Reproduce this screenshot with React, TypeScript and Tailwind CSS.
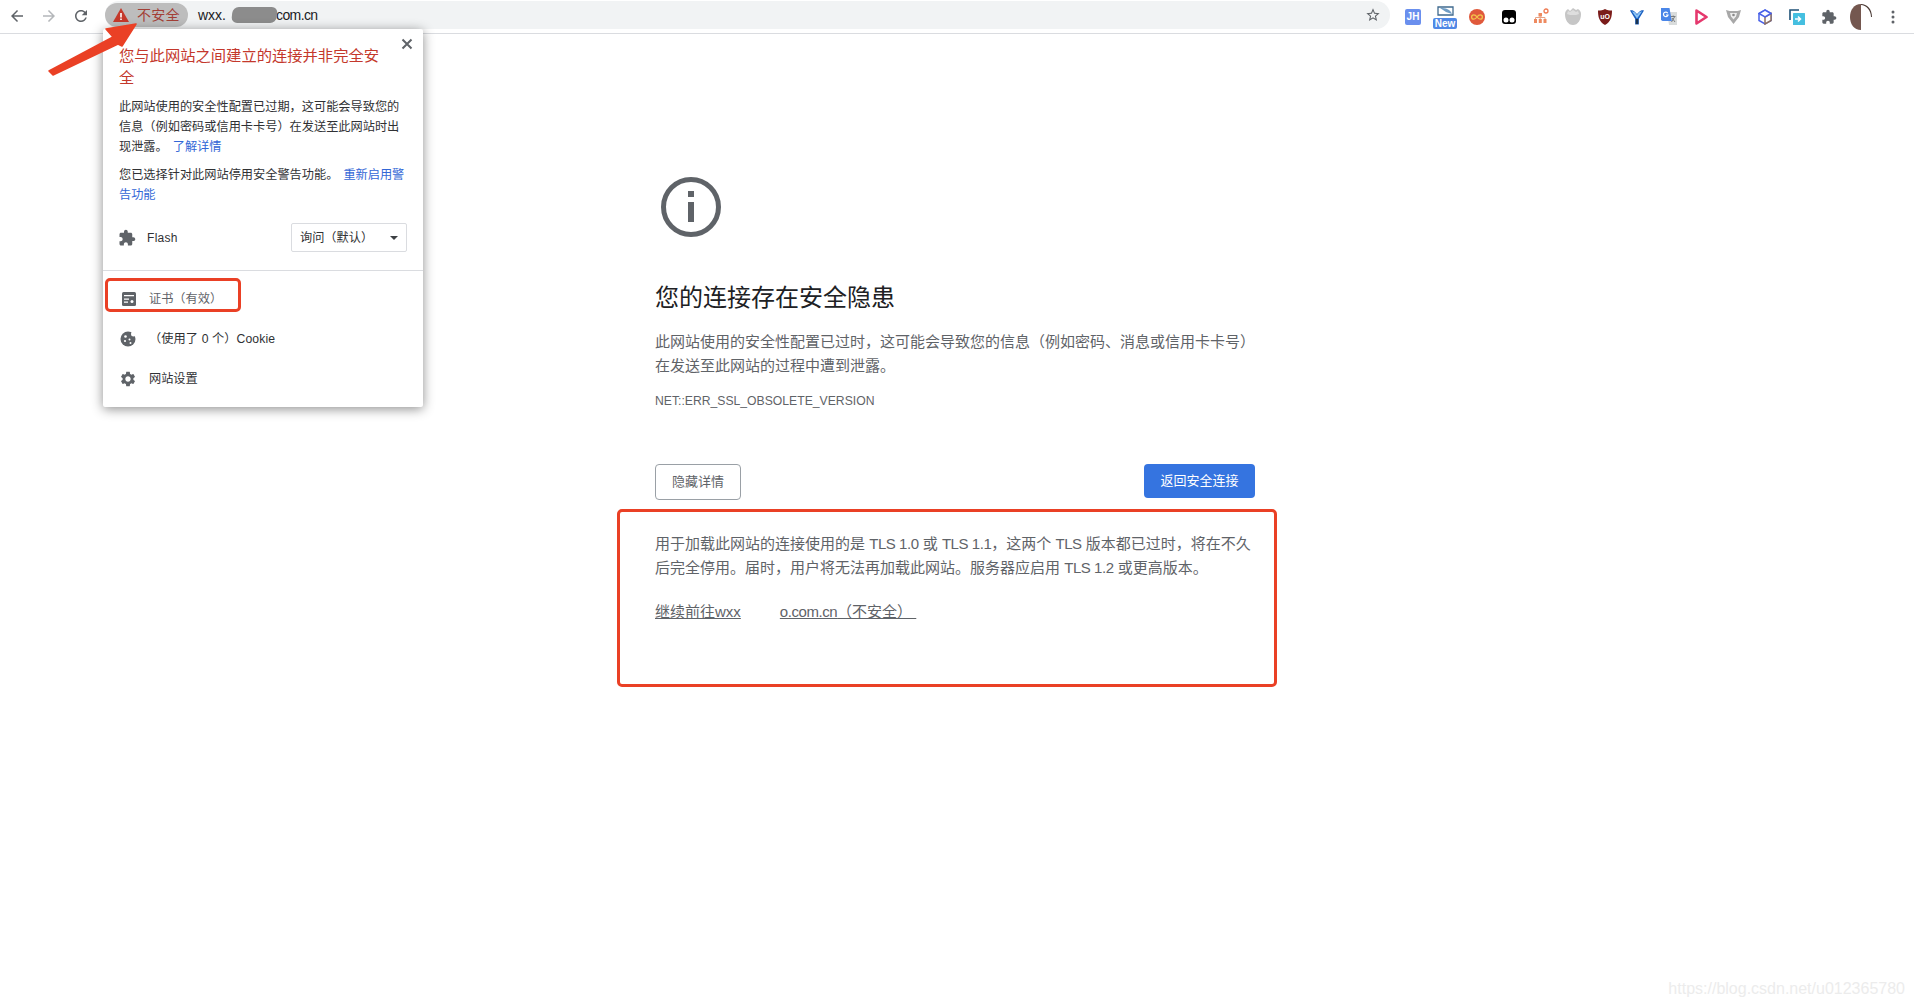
import type { ReactNode } from 'react';

const BACK = 'M20 11H7.83l5.59-5.59L12 4l-8 8 8 8 1.41-1.41L7.83 13H20v-2z';
const FORWARD = 'M4 11h12.17l-5.59-5.59L12 4l8 8-8 8-1.41-1.41L16.17 13H4v-2z';
const RELOAD = 'M17.65 6.35C16.2 4.9 14.21 4 12 4c-4.42 0-7.99 3.58-7.99 8s3.57 8 7.99 8c3.73 0 6.84-2.55 7.73-6h-2.08c-.82 2.33-3.04 4-5.65 4-3.31 0-6-2.69-6-6s2.69-6 6-6c1.66 0 3.14.69 4.22 1.78L13 11h7V4l-2.35 2.35z';
const PUZZLE = 'M20.5 11H19V7c0-1.1-.9-2-2-2h-4V3.5C13 2.12 11.88 1 10.5 1S8 2.12 8 3.5V5H4c-1.1 0-1.99.9-1.99 2v3.8H3.5c1.49 0 2.7 1.21 2.7 2.7s-1.21 2.7-2.7 2.7H2V20c0 1.1.9 2 2 2h3.8v-1.5c0-1.49 1.21-2.7 2.7-2.7 1.49 0 2.7 1.21 2.7 2.7V22H17c1.1 0 2-.9 2-2v-4h1.5c1.38 0 2.5-1.12 2.5-2.5S21.88 11 20.5 11z';
const GEAR = 'M19.14 12.94c.04-.3.06-.61.06-.94 0-.32-.02-.64-.07-.94l2.03-1.58c.18-.14.23-.41.12-.61l-1.92-3.32c-.12-.22-.37-.29-.59-.22l-2.39.96c-.5-.38-1.03-.7-1.62-.94l-.36-2.54c-.04-.24-.24-.41-.48-.41h-3.84c-.24 0-.43.17-.47.41l-.36 2.54c-.59.24-1.13.57-1.62.94l-2.39-.96c-.22-.08-.47 0-.59.22L2.74 8.87c-.12.21-.08.47.12.61l2.03 1.58c-.05.3-.09.63-.09.94s.02.64.07.94l-2.03 1.58c-.18.14-.23.41-.12.61l1.92 3.32c.12.22.37.29.59.22l2.39-.96c.5.38 1.03.7 1.62.94l.36 2.54c.05.24.24.41.48.41h3.84c.24 0 .44-.17.47-.41l.36-2.54c.59-.24 1.13-.56 1.62-.94l2.39.96c.22.08.47 0 .59-.22l1.92-3.32c.12-.22.07-.47-.12-.61l-2.01-1.58zM12 15.6c-1.98 0-3.6-1.62-3.6-3.6s1.62-3.6 3.6-3.6 3.6 1.62 3.6 3.6-1.62 3.6-3.6 3.6z';

function Mat({ d, size, fill }: { d: string; size: number; fill: string }) {
  return (
    <svg width={size} height={size} viewBox="0 0 24 24" fill={fill} className="block shrink-0">
      <path d={d} />
    </svg>
  );
}

function NavButton({ children }: { children: ReactNode }) {
  return <div className="w-[32px] h-[32px] flex items-center justify-center">{children}</div>;
}

function ExtCell({ children }: { children: ReactNode }) {
  return <div className="relative w-[32px] h-[33px] flex items-center justify-center shrink-0">{children}</div>;
}

// latin bits of the error text run narrower than Liberation Sans
function Latin({ children }: { children: ReactNode }) {
  return <span className="tracking-[-0.45px]">{children}</span>;
}

function Extensions() {
  return (
    <div className="flex ml-[7px]">
      <ExtCell>
        <div className="w-[16px] h-[16px] rounded-[2px] bg-[#6a8fee] text-white text-[10px] font-bold leading-[16px] text-center">JH</div>
      </ExtCell>
      <ExtCell>
        <svg width="17" height="10" viewBox="0 0 17 10" className="absolute top-[6px] left-[8px]">
          <path d="M1 1h15v8H1z" fill="#fff" stroke="#3f6a8f" strokeWidth="1.3" />
          <path d="M3 2c6 0 10 1 12 6l-6-2z" fill="#6f9cc4" />
        </svg>
        <div className="absolute left-[4px] top-[18px] w-[24px] h-[11px] rounded-[2px] bg-[#4f88e6] text-white text-[10px] font-bold leading-[11px] text-center">New</div>
      </ExtCell>
      <ExtCell>
        <svg width="16" height="16" viewBox="0 0 16 16">
          <circle cx="8" cy="8" r="8" fill="#e0593b" />
          <path d="M8 8C6.8 6.2 5.8 5.8 4.8 5.8a2.2 2.2 0 0 0 0 4.4C5.8 10.2 6.8 9.8 8 8c1.200-1.800 2.200-2.200 3.200-2.200a2.200 2.200 0 0 1 0 4.400C10.200 10.200 9.200 9.800 8 8z" fill="none" stroke="#f3c44c" strokeWidth="1.300" />
        </svg>
      </ExtCell>
      <ExtCell>
        <svg width="14" height="14" viewBox="0 0 14 14">
          <rect width="14" height="14" rx="3" fill="#000" />
          <circle cx="4" cy="10" r="2.500" fill="#fff" />
          <circle cx="10" cy="10" r="2.500" fill="#fff" />
        </svg>
      </ExtCell>
      <ExtCell>
        <svg width="16" height="17" viewBox="0 0 16 17">
          <circle cx="13" cy="3" r="2" fill="none" stroke="#ee7a52" strokeWidth="1.300" />
          <path d="M5.500 5h3.500v3.500H5.500zM1 11h3v4H1zM5.800 11h3v4h-3zM10.500 11h3v4h-3z" fill="#ee8a60" />
          <path d="M7.200 8v3M2.500 11V9.500h9.500V11" fill="none" stroke="#e6a488" strokeWidth="1" />
        </svg>
      </ExtCell>
      <ExtCell>
        <svg width="16" height="17" viewBox="0 0 16 17">
          <path d="M0 6c0-2 1-4 3-5l2 2 3-3 3 2 2-1c2 1 3 3 3 5 0 6-3 11-8 11S0 12 0 6z" fill="#c6c6c6" />
          <path d="M3 3l2 1 3-2 3 2 2-1 1 3-3 1H5L2 6z" fill="#dedede" />
        </svg>
      </ExtCell>
      <ExtCell>
        <div className="relative w-[14px] h-[16px] flex items-center justify-center">
          <svg width="14" height="16" viewBox="0 0 14 16" className="absolute inset-0">
            <path d="M7 0c2 1 4 1.600 7 1.600 0 6-1 11.400-7 14.400C1 13 0 7.600 0 1.600 3 1.600 5 1 7 0z" fill="#7a1c1a" />
          </svg>
          <span className="relative text-white text-[7px] font-bold leading-none">uO</span>
        </div>
      </ExtCell>
      <ExtCell>
        <svg width="14" height="16" viewBox="0 0 14 16">
          <path d="M0 1.500C2 1 3.500 1.500 5 3l2 2 2-2c1.500-1.500 3-2 5-1.500L8.800 10v5.500H5.200V10z" fill="#1a5fc0" />
          <path d="M2 2.500c1.500 0 2.500.5 3.500 1.500L7 6l1.500-2c1-1 2-1.500 3.500-1.500L7 9.500z" fill="#8cc4f5" />
          <path d="M5.700 10h2.600v5H5.700z" fill="#1b3350" />
        </svg>
      </ExtCell>
      <ExtCell>
        <svg width="16" height="17" viewBox="0 0 16 17">
          <path d="M6 4h10v13H8z" fill="#d9dcdc" />
          <path d="M10 8.500h4.500M12.200 7.500v1M10.500 14l3-5M11 10l3 4" stroke="#6f7376" strokeWidth="0.900" fill="none" />
          <path d="M0 0h8.500l2.300 13H1.500L0 12z" fill="#4a86e8" />
          <path d="M6.800 5.200A2.300 2.300 0 1 0 7 7H5" fill="none" stroke="#fff" strokeWidth="1.200" />
        </svg>
      </ExtCell>
      <ExtCell>
        <svg width="13" height="16" viewBox="0 0 13 16">
          <path d="M1.500 1.500L11.500 8L1.500 14.500z" fill="none" stroke="#e5386d" strokeWidth="2.600" strokeLinejoin="round" />
        </svg>
      </ExtCell>
      <ExtCell>
        <svg width="15" height="15" viewBox="0 0 15 15">
          <path d="M0 1l3.500 1h8L15 1l-2 7-5.500 7L2 8z" fill="#a8a8a8" />
          <path d="M4 4h7l-1 3.500-2.500 3-2.500-3z" fill="#eee" />
          <circle cx="7.500" cy="6" r="1.300" fill="#8a8a8a" />
        </svg>
      </ExtCell>
      <ExtCell>
        <svg width="14" height="16" viewBox="0 0 14 16">
          <path d="M7 1l6 3.500v7L7 15 1 11.500v-7z" fill="#fff" stroke="#4a62e8" strokeWidth="1.500" />
          <path d="M7 8l6-3.500v7L7 15z" fill="#fff" stroke="#8c6f62" strokeWidth="1.500" />
          <path d="M1 4.500L7 8l6-3.500L7 1z" fill="#fff" stroke="#4a62e8" strokeWidth="1.500" />
        </svg>
      </ExtCell>
      <ExtCell>
        <svg width="16" height="16" viewBox="0 0 16 16">
          <path d="M1 11V1h9" fill="none" stroke="#1f5277" strokeWidth="1.600" />
          <rect x="4" y="4" width="12" height="12" rx="0.500" fill="#45bfe0" />
          <path d="M6 10h5M9 7.500l2.500 2.500L9 12.500" fill="none" stroke="#fff" strokeWidth="1.500" />
        </svg>
      </ExtCell>
      <ExtCell>
        <Mat d={PUZZLE} size={16} fill="#5f6368" />
      </ExtCell>
      <ExtCell>
        <svg width="22" height="26" viewBox="0 0 22 26">
          <path d="M11 0C4 0 0 6 0 13s4 13 11 13z" fill="#74574f" />
          <path d="M11 0c6 0 11 5 11 13h-1C21 6 16 1 11 1z" fill="#4a3a35" />
        </svg>
      </ExtCell>
      <ExtCell>
        <svg width="4" height="14" viewBox="0 0 4 14" fill="#5f6368">
          <circle cx="2" cy="2" r="1.500" />
          <circle cx="2" cy="7" r="1.500" />
          <circle cx="2" cy="12" r="1.500" />
        </svg>
      </ExtCell>
    </div>
  );
}

function Toolbar() {
  return (
    <div className="h-[34px] flex items-start border-b border-[#dadce0] bg-white pl-[1px]">
      <NavButton><Mat d={BACK} size={18} fill="#5f6368" /></NavButton>
      <NavButton><Mat d={FORWARD} size={18} fill="#b4b7ba" /></NavButton>
      <NavButton><Mat d={RELOAD} size={18} fill="#5f6368" /></NavButton>
      <div className="ml-[8px] mt-[1px] w-[1285px] h-[28px] rounded-full bg-[#f1f3f4] flex items-center">
        <div className="w-[83px] h-[24px] rounded-full bg-[#bdbdbd] flex items-center pl-[8px]">
          <svg width="16" height="14" viewBox="0 0 16 14" className="shrink-0">
            <path d="M8 0l8 14H0z" fill="#c5392b" />
            <path d="M7.200 5h1.600v4.500H7.200zM7.200 10.500h1.600V12H7.200z" fill="#fff" />
          </svg>
          <span className="ml-[8px] text-[14px] tracking-[0.3px] text-[#a33f36] whitespace-nowrap">不安全</span>
        </div>
        <div className="ml-[10px] text-[14px] text-[#202124] whitespace-nowrap flex items-center">
          wxx.<span className="inline-block ml-[6px] w-[45px] h-[16px] bg-[#8c8c8c] rounded-[6px] -skew-x-6" />
          <span className="-ml-[1px] tracking-[-0.6px]">com.cn</span>
        </div>
        <div className="ml-auto mr-[9px]">
          <svg width="16" height="16" viewBox="0 0 24 24" fill="#5f6368">
            <path d="M22 9.240l-7.190-.62L12 2 9.190 8.630 2 9.240l5.460 4.730L5.820 21 12 17.270 18.180 21l-1.630-7.030L22 9.240zM12 15.400l-3.760 2.270 1-4.280-3.320-2.880 4.380-.38L12 6.100l1.710 4.040 4.380.38-3.320 2.880 1 4.280L12 15.400z" />
          </svg>
        </div>
      </div>
      <Extensions />
    </div>
  );
}

function PopupRow({ icon, children }: { icon: ReactNode; children: ReactNode }) {
  return (
    <div className="h-[40px] flex items-center pl-[17px]">
      <div className="w-[30px] -ml-[1px] shrink-0 flex">{icon}</div>
      <div className="text-[12.2px] text-[#303134] whitespace-nowrap">{children}</div>
    </div>
  );
}

function SecurityPopup() {
  return (
    <div className="absolute left-[103px] top-[29px] w-[320px] h-[378px] bg-white rounded-[2px] shadow-[0_2px_12px_rgba(0,0,0,0.45)] pt-[16px]">
      <svg width="12" height="12" viewBox="0 0 12 12" className="absolute top-[9px] right-[10px]">
        <path d="M1.500 1.500l9 9M10.500 1.500l-9 9" stroke="#5f6368" strokeWidth="2" />
      </svg>
      <div className="px-[16px]">
        <h2 className="w-[266px] text-[15.3px] leading-[22px] text-[#c4382c] font-normal">您与此网站之间建立的连接并非完全安全</h2>
        <p className="mt-[8px] w-[288px] text-[12.2px] leading-[20px] text-[#303134]">
          此网站使用的安全性配置已过期，这可能会导致您的信息（例如密码或信用卡卡号）在发送至此网站时出现泄露。
          <span className="ml-[5px] text-[#3367d6]">了解详情</span>
        </p>
        <p className="mt-[8px] w-[288px] text-[12.2px] leading-[20px] text-[#303134]">
          您已选择针对此网站停用安全警告功能。
          <span className="ml-[5px] text-[#3367d6]">重新启用警告功能</span>
        </p>
        <div className="mt-[18px] flex items-center justify-between">
          <div className="flex items-center -ml-[1px]">
            <Mat d={PUZZLE} size={18} fill="#5f6368" />
            <span className="ml-[11px] text-[12px] tracking-[0.3px] text-[#303134]">Flash</span>
          </div>
          <div className="w-[116px] h-[29px] border border-[#dadce0] rounded-[2px] flex items-center justify-between pl-[8px] pr-[8px] pt-[1px] text-[12.2px] text-[#303134]">
            询问（默认）
            <span className="w-0 h-0 border-x-[4px] border-x-transparent border-t-[4px] border-t-[#3c4043]" />
          </div>
        </div>
      </div>
      <div className="mt-[18px] border-t border-[#dadce0] pt-[8px]">
        <PopupRow icon={
          <svg width="16" height="16" viewBox="0 0 16 16" className="ml-[2px]">
            <rect x="1" y="1" width="14" height="14" rx="1.500" fill="#5f6368" />
            <path d="M3 4h10v1.300H3zM3 7.500h5v1.200H3zM3 10.500h4v1.200H3z" fill="#fff" />
            <circle cx="11" cy="10.500" r="1.500" fill="#fff" />
          </svg>
        }>
          <span className="text-[#5f6368]">证书（有效）</span>
        </PopupRow>
        <PopupRow icon={
          <svg width="16" height="16" viewBox="0 0 16 16" className="ml-[1px]">
            <circle cx="8" cy="8" r="7.500" fill="#5f6368" />
            <circle cx="5.500" cy="5.500" r="1.300" fill="#fff" />
            <circle cx="5" cy="10" r="1.100" fill="#fff" />
            <circle cx="9.500" cy="8.500" r="1" fill="#fff" />
            <circle cx="10.500" cy="12" r="1" fill="#fff" />
            <circle cx="13.500" cy="3" r="2.500" fill="#fff" />
          </svg>
        }>
          <span className="tracking-[0.1px]">（使用了 0 个）Cookie</span>
        </PopupRow>
        <PopupRow icon={<Mat d={GEAR} size={18} fill="#5f6368" />}>网站设置</PopupRow>
      </div>
    </div>
  );
}

function ErrorPage() {
  return (
    <div className="ml-[655px] w-[600px] pt-[143px]">
      <svg width="60" height="60" viewBox="0 0 60 60" className="ml-[6px] block">
        <circle cx="30" cy="30" r="27.500" fill="none" stroke="#5f6368" strokeWidth="5" />
        <rect x="27" y="14" width="6" height="6" fill="#5f6368" />
        <rect x="27" y="25" width="6" height="20" fill="#5f6368" />
      </svg>
      <h1 className="mt-[43px] text-[24px] leading-[36px] font-normal text-[#202124]">您的连接存在安全隐患</h1>
      <p className="mt-[14px] text-[15px] leading-[24px] text-[#5f6368]">
        此网站使用的安全性配置已过时，这可能会导致您的信息（例如密码、消息或信用卡卡号）在发送至此网站的过程中遭到泄露。
      </p>
      <div className="mt-[14px] text-[12.2px] leading-[18px] text-[#5f6368]">NET::ERR_SSL_OBSOLETE_VERSION</div>
      <div className="mt-[54px] flex justify-between items-start">
        <button className="w-[86px] h-[36px] border border-[#9aa0a6] rounded-[4px] bg-white text-[13px] text-[#5f6368]">隐藏详情</button>
        <button className="w-[111px] h-[34px] rounded-[4px] bg-[#3574e0] text-[13px] text-white">返回安全连接</button>
      </div>
      <p className="mt-[32px] text-[15px] leading-[24px] text-[#5f6368]">
        用于加载此网站的连接使用的是 <Latin>TLS 1.0</Latin> 或 <Latin>TLS 1.1</Latin>，这两个 <Latin>TLS</Latin> 版本都已过时，将在不久后完全停用。届时，用户将无法再加载此网站。服务器应启用 <Latin>TLS 1.2</Latin> 或更高版本。
      </p>
      <p className="mt-[20px] text-[15px] leading-[24px] text-[#5f6368] whitespace-pre">
        <span className="underline">继续前往wxx</span>
        <span className="inline-block w-[39px]" />
        <span className="underline"><Latin>o.com.cn</Latin>（不安全） </span>
      </p>
    </div>
  );
}

export default function App() {
  return (
    <div className="relative w-[1914px] h-[1008px] overflow-hidden bg-white font-['Liberation_Sans','Noto_Sans_CJK_SC',sans-serif]">
      <Toolbar />
      <ErrorPage />
      <SecurityPopup />

      {/* annotation marks over the screenshot */}
      <svg width="140" height="80" viewBox="0 0 140 80" className="absolute left-0 top-0">
        <path d="M136 24L106 29 113 37 49 71 53 75 118 44 122 46z" fill="#ea4025" stroke="#ea4025" strokeWidth="1.500" strokeLinejoin="round" />
      </svg>
      <div className="absolute left-[105px] top-[278px] w-[136px] h-[34px] border-[3px] border-[#ea4025] rounded-[5px]" />
      <div className="absolute left-[617px] top-[509px] w-[660px] h-[178px] border-[3px] border-[#ea4025] rounded-[5px]" />
      <div className="absolute right-[9px] bottom-[9px] text-[16px] leading-[20px] text-[#ececec]">https://blog.csdn.net/u012365780</div>
    </div>
  );
}
